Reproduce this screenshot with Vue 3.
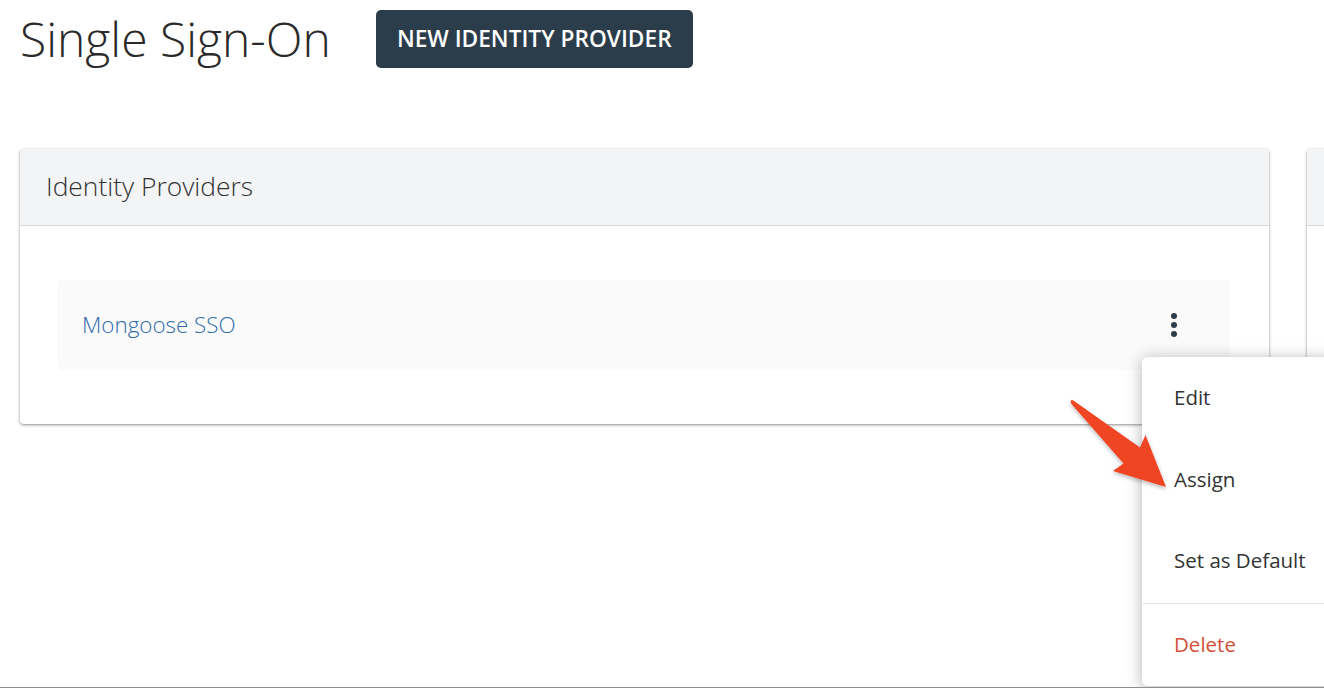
<script setup>
const menuItems = ['Edit', 'Assign', 'Set as Default']
</script>

<template>
  <div class="page">
    <header class="top">
      <h1 class="title">Single Sign-On</h1>
      <button class="primary">NEW IDENTITY PROVIDER</button>
    </header>
    <div class="cards">
      <section class="card">
        <div class="card-head">Identity Providers</div>
        <div class="card-body">
          <div class="row">
            <a class="link">Mongoose SSO</a>
            <span class="dots"><i></i><i></i><i></i></span>
          </div>
        </div>
      </section>
      <section class="card">
        <div class="card-head"></div>
      </section>
    </div>
    <nav class="menu">
      <div v-for="item in menuItems" :key="item" class="item">{{ item }}</div>
      <div class="item delete">Delete</div>
    </nav>
    <svg class="arrow" width="110" height="100" viewBox="1065 395 110 100">
      <defs>
        <filter id="sh" x="-20%" y="-20%" width="140%" height="140%">
          <feDropShadow dx="0" dy="2" stdDeviation="2" flood-color="#000" flood-opacity="0.28" />
        </filter>
      </defs>
      <path d="M1071 400.5 Q1072 399.5 1074 401 L1140 447.5 L1145.5 435 L1166 487 L1113 471 L1123.5 463.5 L1071.5 404 Q1070 402 1071 400.5 Z" fill="#ef4423" filter="url(#sh)" />
    </svg>
  </div>
</template>

<style>
html, body { margin: 0; background: #fff; overflow: hidden; }
</style>

<style scoped>
.page {
  position: relative;
  width: 1324px;
  height: 688px;
  overflow: hidden;
  box-sizing: border-box;
  border-bottom: 1px solid #8f8f8f;
  padding: 10px 0 0 20px;
  font-family: "Open Sans", sans-serif;
  color: #2b2b2b;
  background: #fff;
}
.top { display: flex; align-items: center; height: 58px; gap: 45px; }
.title { margin: 0; font-size: 48px; font-weight: 300; line-height: 58px; color: #2a2a2a; white-space: nowrap; }
.primary {
  width: 317px;
  height: 58px;
  border: 0;
  border-radius: 5px;
  background: #2b3d4b;
  color: #fff;
  font-family: inherit;
  font-size: 22.7px;
  font-weight: 600;
  line-height: 56px;
  padding: 0;
  white-space: nowrap;
}
.cards { display: flex; gap: 38px; margin-top: 81px; }
.card {
  flex: 0 0 1249px;
  height: 275px;
  border-radius: 4px;
  background: #fff;
  box-shadow: 0 1px 3px rgba(0, 0, 0, 0.45);
  overflow: hidden;
}
.card-head {
  height: 77px;
  box-sizing: border-box;
  padding: 0 26px;
  line-height: 75px;
  background: #f3f4f5;
  border-bottom: 1px solid #d8d8d8;
  font-size: 26.4px;
  font-weight: 300;
  color: #333;
}
.card-body { padding: 54px 39px 0 37px; }
.row {
  height: 90px;
  box-sizing: border-box;
  padding: 0 53px 0 25px;
  display: flex;
  align-items: center;
  justify-content: space-between;
  background: #fafafa;
  border-radius: 5px;
}
.link { font-size: 22.4px; font-weight: 300; line-height: 88px; color: #2f6ba8; }
.dots { display: flex; flex-direction: column; gap: 3px; }
.dots i { display: block; width: 6px; height: 6px; border-radius: 50%; background: #2b3d4b; }
.menu {
  position: absolute;
  left: 1142px;
  top: 357px;
  width: 240px;
  height: 329px;
  box-sizing: border-box;
  background: #fff;
  border-radius: 6px;
  box-shadow: 0 2px 16px rgba(0, 0, 0, 0.3);
}
.item { height: 82px; padding: 0 32px; line-height: 81px; font-size: 20.5px; color: #333; white-space: nowrap; }
.item:nth-child(3) { height: 82px; line-height: 79px; }
.delete { border-top: 1px solid #e6e6e6; color: #d4503a; line-height: 81px; }
.arrow { position: absolute; left: 1065px; top: 395px; overflow: visible; }
</style>
